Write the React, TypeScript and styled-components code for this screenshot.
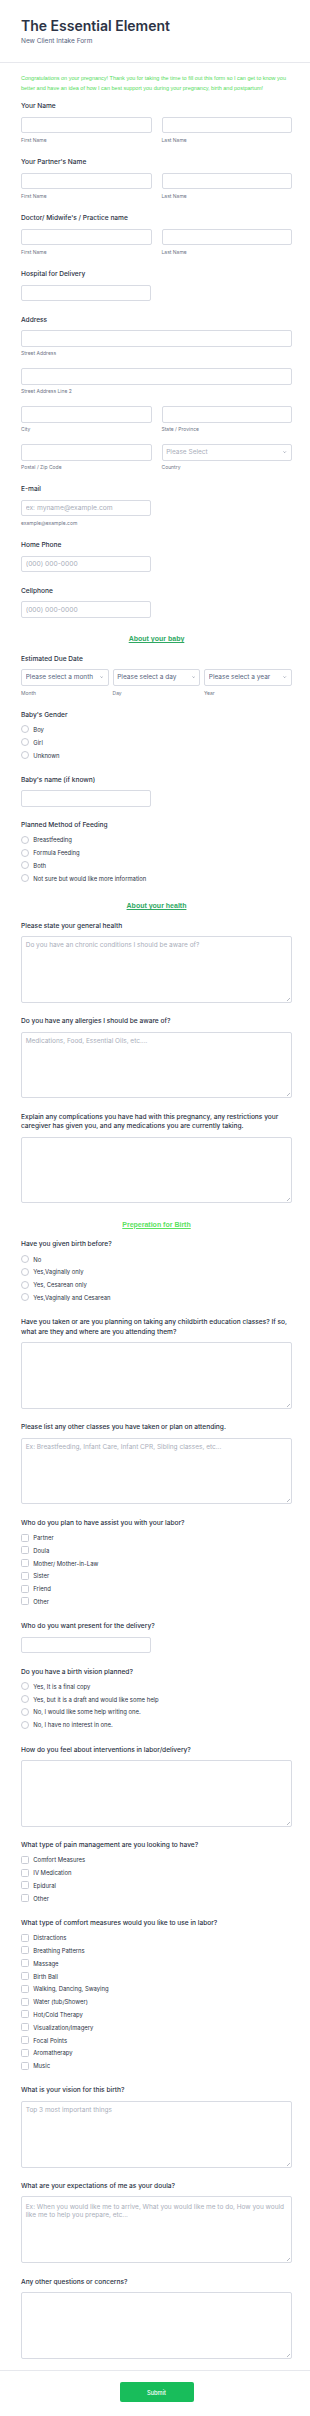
import React from "react";
import styled, { createGlobalStyle } from "styled-components";

const GlobalStyle = createGlobalStyle`
  html, body {
    margin: 0;
    padding: 0;
    background: #fff;
  }
  body {
    font-family: Inter, "Noto Sans", sans-serif;
    color: #2c3345;
  }
  * {
    box-sizing: border-box;
  }
`;

const Page = styled.div`
  width: 310px;
  min-height: 2416px;
  background: #fff;
`;

const Header = styled.header`
  padding: 16.5px 18px 17.8px 21px;
  border-bottom: 1px solid #e7e8ed;
`;

const Title = styled.h1`
  margin: 0;
  font-size: 14px;
  line-height: 17px;
  font-weight: 600;
  color: #2c3345;
`;

const Subtitle = styled.p`
  margin: 3px 0 0;
  font-size: 6.5px;
  line-height: 8px;
  color: #57647e;
`;

const Form = styled.form`
  padding: 0 18px 0 21px;
`;

const Intro = styled.p`
  margin: 0;
  padding: 9.7px 0 2.1px;
  font-family: "Liberation Sans", Arial, sans-serif;
  font-size: 5.5px;
  line-height: 10px;
  color: #56dc5e;
`;

const Field = styled.div`
  padding: 7.2px 0;
`;

const Label = styled.label`
  display: block;
  margin-bottom: 5px;
  font-size: 6.6px;
  line-height: 9.4px;
  font-weight: 500;
  color: #2c3345;
`;

const Row = styled.div<{ $cols?: number }>`
  display: grid;
  grid-template-columns: repeat(${(p) => p.$cols ?? 2}, 1fr);
  column-gap: ${(p) => (p.$cols === 3 ? 3.6 : 10)}px;
  & + & {
    margin-top: 10.8px;
  }
`;

const Input = styled.input<{ $half?: boolean }>`
  display: block;
  width: ${(p) => (p.$half ? "129.7px" : "100%")};
  height: 16.6px;
  margin: 0;
  padding: 0 3.7px;
  border: 1px solid #d8dbe3;
  border-radius: 2px;
  background: #fff;
  font-family: inherit;
  font-size: 6.7px;
  color: #2c3345;
  outline: none;
  &::placeholder {
    color: #a9aeba;
  }
`;

const SelectBox = styled.div`
  position: relative;
`;

const Select = styled.select<{ $muted?: boolean }>`
  display: block;
  width: 100%;
  height: 16.6px;
  margin: 0;
  padding: 0 10px 0 3.7px;
  border: 1px solid #d8dbe3;
  border-radius: 2px;
  background: #fff;
  font-family: inherit;
  font-size: 6.5px;
  color: ${(p) => (p.$muted ? "#a9aeba" : "#57647e")};
  appearance: none;
  outline: none;
`;

const Chevron = styled.svg`
  position: absolute;
  right: 5.5px;
  top: 7px;
  width: 3.4px;
  height: 2.2px;
  pointer-events: none;
`;

const SubLabel = styled.span`
  display: block;
  margin-top: 4.8px;
  font-size: 5px;
  line-height: 5.8px;
  color: #6f7687;
`;

const OptionList = styled.div`
  margin-top: -2.1px;
`;

const Option = styled.label`
  display: flex;
  align-items: center;
  gap: 4.3px;
  height: 12.8px;
  font-size: 5.9px;
  color: #2c3345;
`;

const Mark = styled.input<{ $square?: boolean }>`
  appearance: none;
  flex: none;
  width: 8px;
  height: 8px;
  margin: 0;
  border: 1px solid #c9ccd5;
  border-radius: ${(p) => (p.$square ? "1.5px" : "50%")};
  background: #fff;
`;

const AreaBox = styled.div`
  position: relative;
`;

const TextArea = styled.textarea<{ $lines?: number }>`
  display: block;
  width: 100%;
  height: 66.8px;
  margin: 0;
  padding: ${(p) => (p.$lines === 2 ? "5.4px" : "4px")} 3.7px;
  border: 1px solid #d8dbe3;
  border-radius: 2px;
  background: #fff;
  font-family: inherit;
  font-size: 6.5px;
  line-height: ${(p) => (p.$lines === 2 ? "8px" : "8.6px")};
  color: #2c3345;
  resize: none;
  outline: none;
  &::placeholder {
    color: #a9aeba;
  }
`;

const Grip = styled.span`
  position: absolute;
  right: 2px;
  bottom: 2px;
  width: 3px;
  height: 3px;
  background: linear-gradient(
    135deg,
    transparent 45%,
    #b7bbc4 45% 55%,
    transparent 55% 72%,
    #b7bbc4 72% 82%,
    transparent 82%
  );
  pointer-events: none;
`;

const SectionHeading = styled.h2<{ $tone: string }>`
  margin: 0;
  padding: 7.2px 0 2.2px;
  text-align: center;
  font-family: "Liberation Sans", Arial, sans-serif;
  font-size: 7px;
  line-height: 13.2px;
  font-weight: 700;
  text-decoration: underline;
  color: ${(p) => p.$tone};
`;

const Footer = styled.div`
  margin-top: 3.8px;
  padding: 11.7px 18px 16px 21px;
  border-top: 1px solid #e7e8ed;
  display: flex;
  justify-content: center;
`;

const SubmitButton = styled.button`
  width: 74px;
  height: 19.7px;
  border: none;
  border-radius: 2px;
  background: #18bd5b;
  color: #fff;
  font-family: inherit;
  font-size: 5.7px;
  font-weight: 500;
`;

const ChevronIcon = () => (
  <Chevron viewBox="0 0 6 4">
    <path d="M0.8 0.8 L3 3 L5.2 0.8" fill="none" stroke="#57647e" strokeWidth="0.9" />
  </Chevron>
);

const Dropdown = ({ text, muted }: { text: string; muted?: boolean }) => (
  <SelectBox>
    <Select $muted={muted} defaultValue="">
      <option value="">{text}</option>
    </Select>
    <ChevronIcon />
  </SelectBox>
);

const Area = ({ placeholder, lines }: { placeholder?: string; lines?: number }) => (
  <AreaBox>
    <TextArea placeholder={placeholder} $lines={lines} />
    <Grip />
  </AreaBox>
);

const NameField = ({ label }: { label: string }) => (
  <Field>
    <Label>{label}</Label>
    <Row>
      <div>
        <Input />
        <SubLabel>First Name</SubLabel>
      </div>
      <div>
        <Input />
        <SubLabel>Last Name</SubLabel>
      </div>
    </Row>
  </Field>
);

const ChoiceField = ({
  label,
  name,
  options,
  multi,
}: {
  label: string;
  name: string;
  options: string[];
  multi?: boolean;
}) => (
  <Field>
    <Label>{label}</Label>
    <OptionList>
      {options.map((o) => (
        <Option key={o}>
          <Mark type={multi ? "checkbox" : "radio"} name={name} $square={multi} />
          {o}
        </Option>
      ))}
    </OptionList>
  </Field>
);

const AreaField = ({
  label,
  placeholder,
  lines,
}: {
  label: string;
  placeholder?: string;
  lines?: number;
}) => (
  <Field>
    <Label>{label}</Label>
    <Area placeholder={placeholder} lines={lines} />
  </Field>
);

const ShortField = ({ label, placeholder, sub }: { label: string; placeholder?: string; sub?: string }) => (
  <Field>
    <Label>{label}</Label>
    <Input $half placeholder={placeholder} />
    {sub && <SubLabel>{sub}</SubLabel>}
  </Field>
);

export default function App() {
  return (
    <Page>
      <GlobalStyle />
      <Header>
        <Title>The Essential Element</Title>
        <Subtitle>New Client Intake Form</Subtitle>
      </Header>
      <Form onSubmit={(e) => e.preventDefault()}>
        <Intro>
          Congratulations on your pregnancy! Thank you for taking the time to fill out this form so I can get to know
          you better and have an idea of how I can best support you during your pregnancy, birth and postpartum!
        </Intro>
        <NameField label="Your Name" />
        <NameField label="Your Partner's Name" />
        <NameField label="Doctor/ Midwife's / Practice name" />
        <ShortField label="Hospital for Delivery" />
        <Field>
          <Label>Address</Label>
          <Row $cols={1}>
            <div>
              <Input />
              <SubLabel>Street Address</SubLabel>
            </div>
          </Row>
          <Row $cols={1}>
            <div>
              <Input />
              <SubLabel>Street Address Line 2</SubLabel>
            </div>
          </Row>
          <Row>
            <div>
              <Input />
              <SubLabel>City</SubLabel>
            </div>
            <div>
              <Input />
              <SubLabel>State / Province</SubLabel>
            </div>
          </Row>
          <Row>
            <div>
              <Input />
              <SubLabel>Postal / Zip Code</SubLabel>
            </div>
            <div>
              <Dropdown text="Please Select" muted />
              <SubLabel>Country</SubLabel>
            </div>
          </Row>
        </Field>
        <ShortField label="E-mail" placeholder="ex: myname@example.com" sub="example@example.com" />
        <ShortField label="Home Phone" placeholder="(000) 000-0000" />
        <ShortField label="Cellphone" placeholder="(000) 000-0000" />

        <SectionHeading $tone="#2ea862">About your baby</SectionHeading>
        <Field>
          <Label>Estimated Due Date</Label>
          <Row $cols={3}>
            <div>
              <Dropdown text="Please select a month" />
              <SubLabel>Month</SubLabel>
            </div>
            <div>
              <Dropdown text="Please select a day" />
              <SubLabel>Day</SubLabel>
            </div>
            <div>
              <Dropdown text="Please select a year" />
              <SubLabel>Year</SubLabel>
            </div>
          </Row>
        </Field>
        <ChoiceField label="Baby's Gender" name="gender" options={["Boy", "Girl", "Unknown"]} />
        <ShortField label="Baby's name (if known)" />
        <ChoiceField
          label="Planned Method of Feeding"
          name="feeding"
          options={["Breastfeeding", "Formula Feeding", "Both", "Not sure but would like more information"]}
        />

        <SectionHeading $tone="#2ea862">About your health</SectionHeading>
        <AreaField
          label="Please state your general health"
          placeholder="Do you have an chronic conditions I should be aware of?"
        />
        <AreaField
          label="Do you have any allergies I should be aware of?"
          placeholder="Medications, Food, Essential Oils, etc...."
        />
        <AreaField label="Explain any complications you have had with this pregnancy, any restrictions your caregiver has given you, and any medications you are currently taking." />

        <SectionHeading $tone="#5be25f">Preperation for Birth</SectionHeading>
        <ChoiceField
          label="Have you given birth before?"
          name="birth"
          options={["No", "Yes,Vaginally only", "Yes, Cesarean only", "Yes,Vaginally and Cesarean"]}
        />
        <AreaField label="Have you taken or are you planning on taking any childbirth education classes? If so, what are they and where are you attending them?" />
        <AreaField
          label="Please list any other classes you have taken or plan on attending."
          placeholder="Ex: Breastfeeding, Infant Care, Infant CPR, Sibling classes, etc..."
        />
        <ChoiceField
          label="Who do you plan to have assist you with your labor?"
          name="assist"
          multi
          options={["Partner", "Doula", "Mother/ Mother-in-Law", "Sister", "Friend", "Other"]}
        />
        <ShortField label="Who do you want present for the delivery?" />
        <ChoiceField
          label="Do you have a birth vision planned?"
          name="vision"
          options={[
            "Yes, It is a final copy",
            "Yes, but it is a draft and would like some help",
            "No, I would like some help writing one.",
            "No, I have no interest in one.",
          ]}
        />
        <AreaField label="How do you feel about interventions in labor/delivery?" />
        <ChoiceField
          label="What type of pain management are you looking to have?"
          name="pain"
          multi
          options={["Comfort Measures", "IV Medication", "Epidural", "Other"]}
        />
        <ChoiceField
          label="What type of comfort measures would you like to use in labor?"
          name="comfort"
          multi
          options={[
            "Distractions",
            "Breathing Patterns",
            "Massage",
            "Birth Ball",
            "Walking, Dancing, Swaying",
            "Water (tub/Shower)",
            "Hot/Cold Therapy",
            "Visualization/Imagery",
            "Focal Points",
            "Aromatherapy",
            "Music",
          ]}
        />
        <AreaField label="What is your vision for this birth?" placeholder="Top 3 most important things" />
        <AreaField
          label="What are your expectations of me as your doula?"
          placeholder="Ex: When you would like me to arrive, What you would like me to do, How you would like me to help you prepare, etc..."
          lines={2}
        />
        <AreaField label="Any other questions or concerns?" />
      </Form>
      <Footer>
        <SubmitButton type="submit">Submit</SubmitButton>
      </Footer>
    </Page>
  );
}
